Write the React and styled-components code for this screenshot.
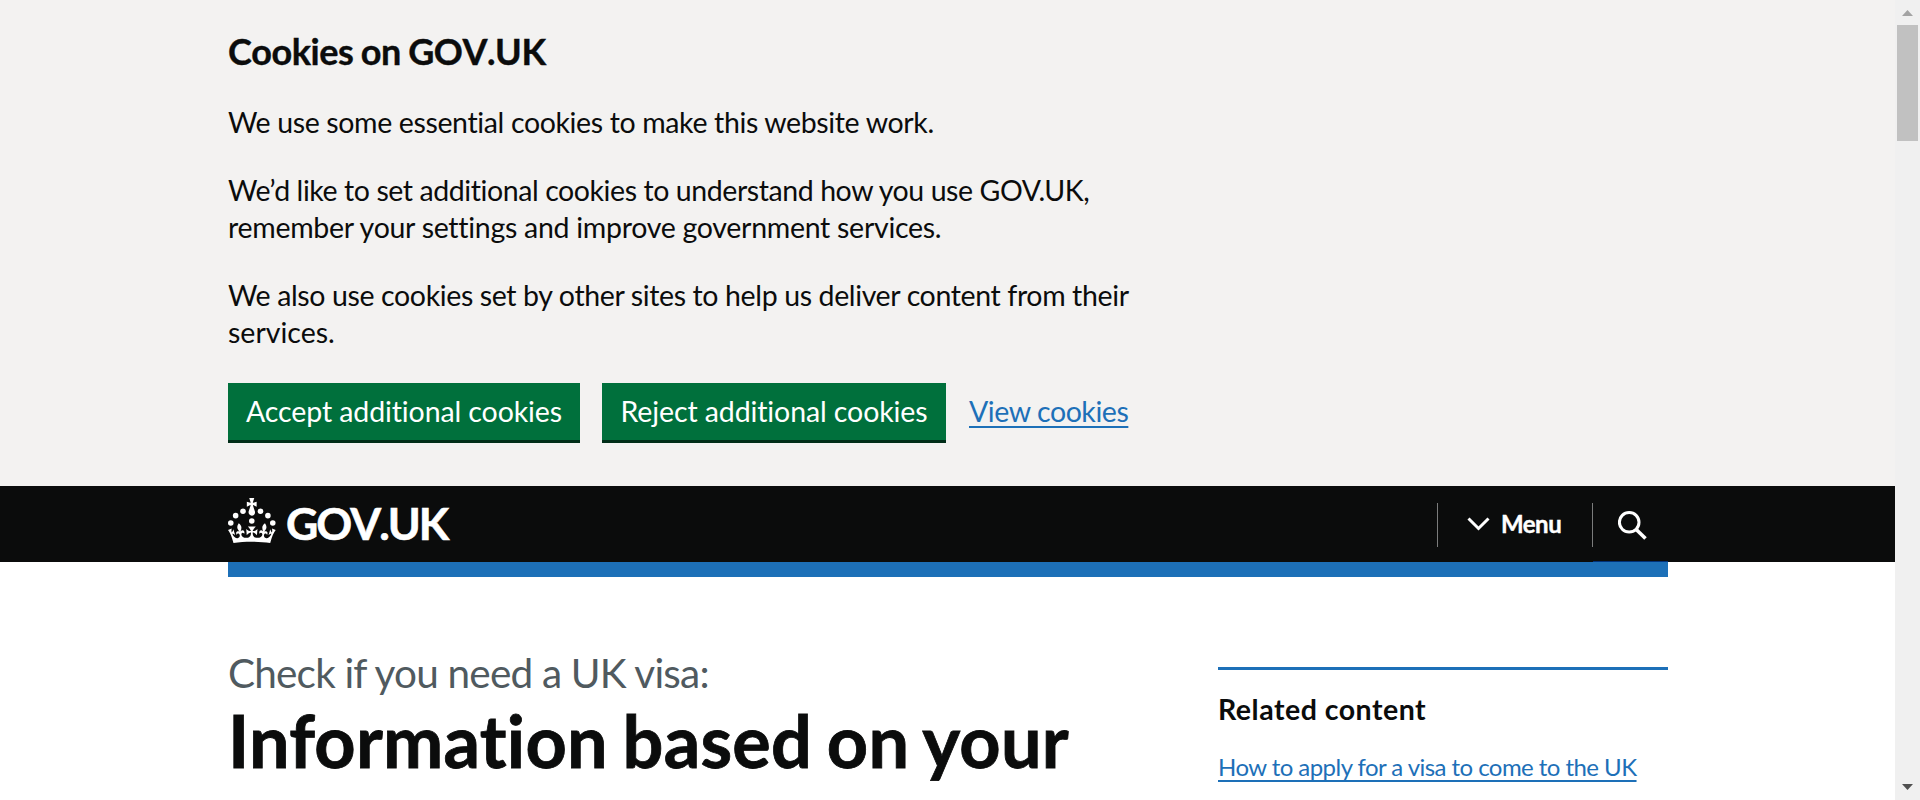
import React from "react";
import styled, { createGlobalStyle } from "styled-components";

const GlobalStyle = createGlobalStyle`
  html, body { margin: 0; padding: 0; overflow: hidden; }
  *, *::before, *::after { box-sizing: border-box; }
  body { font-family: Lato, "Open Sans", sans-serif; color: #0b0c0c; background: #fff; font-variant-ligatures: none; }
`;

const Viewport = styled.div`
  display: flex;
  height: 800px;
  overflow: hidden;
`;

const Page = styled.div`
  flex: 1;
  min-width: 0;
  overflow: hidden;
`;

const Container = styled.div`
  width: 1440px;
  margin-left: 228px;
`;

const CookieBanner = styled.section`
  height: 486px;
  padding-top: 29px;
  background: #f3f2f1;
`;

const BannerTitle = styled.h2`
  margin: 0 0 30px;
  font-size: 36px;
  line-height: 45px;
  font-weight: 700;
  font-kerning: none;
  letter-spacing: -0.45px;
  word-spacing: -1px;
  -webkit-text-stroke: 0.4px #0b0c0c;
`;

const Paragraph = styled.p`
  margin: 0 0 30px;
  font-size: 28.5px;
  line-height: 37.5px;
`;

const Line = styled.span`
  display: block;
  white-space: nowrap;
  letter-spacing: ${(p) => p.$tracking}px;
`;

const ButtonGroup = styled.div`
  display: flex;
  align-items: flex-start;
  margin-top: 31.5px;
`;

const Button = styled.button`
  width: ${(p) => p.$width}px;
  height: 57px;
  margin: 0 22px 0 0;
  padding: 0 0 1px;
  border: 0;
  border-radius: 0;
  background: #00703c;
  box-shadow: 0 3px 0 #002d18;
  color: #fff;
  font: 400 28.5px/37px Lato, sans-serif;
  letter-spacing: ${(p) => p.$tracking}px;
  white-space: nowrap;
`;

const Link = styled.a`
  color: #1d70b8;
  text-decoration: underline;
  text-decoration-thickness: 2px;
  text-underline-offset: 4px;
  text-decoration-skip-ink: none;
  font-size: ${(p) => p.$size}px;
  letter-spacing: ${(p) => p.$tracking}px;
  white-space: nowrap;
`;

const BannerLink = styled(Link)`
  margin: 9.5px 0 0 1px;
  line-height: 37.5px;
`;

const Header = styled.header`
  height: 76px;
  background: #0b0c0c;
`;

const HeaderRow = styled(Container)`
  display: flex;
  justify-content: space-between;
  height: 76px;
`;

const Logo = styled.div`
  display: flex;
  align-items: flex-start;
  padding-top: 12px;
  color: #fff;
  svg { display: block; fill: currentColor; }
`;

const Wordmark = styled.span`
  margin: -1px 0 0 10px;
  font-size: 44.5px;
  line-height: 52px;
  font-weight: 700;
  font-kerning: none;
  letter-spacing: -2px;
  -webkit-text-stroke: 0.6px #fff;
`;

const HeaderNav = styled.nav`
  display: flex;
  align-items: flex-start;
  height: 76px;
`;

const NavDivider = styled.span`
  width: 1px;
  height: 44px;
  margin-top: 17px;
  background: #7b7c7c;
`;

const MenuToggle = styled.div`
  display: flex;
  align-items: center;
  width: 154px;
  height: 76px;
  padding-left: 29px;
  color: #fff;
  font-size: 24px;
  line-height: 30px;
  font-weight: 700;
  letter-spacing: -0.5px;
  -webkit-text-stroke: 0.4px #fff;
  svg { margin-right: 11px; }
`;

const SearchToggle = styled.div`
  width: 75px;
  height: 76px;
  padding: 24px 0 0 25px;
  border-bottom: 1px solid #003078;
  svg { display: block; }
`;

const BlueBar = styled(Container)`
  height: 15px;
  background: #1d70b8;
`;

const Columns = styled(Container)`
  display: flex;
  justify-content: space-between;
  align-items: flex-start;
`;

const TitleBlock = styled.div`
  padding-top: 72.5px;
`;

const Caption = styled.div`
  margin-bottom: 8px;
  color: #505a5f;
  font-size: 40.5px;
  line-height: 45px;
  letter-spacing: -0.81px;
`;

const Title = styled.h1`
  margin: 0;
  font-size: 72px;
  line-height: 75px;
  font-weight: 700;
  letter-spacing: 0.24px;
  word-spacing: -3px;
  -webkit-text-stroke: 0.8px #0b0c0c;
  white-space: nowrap;
`;

const Related = styled.aside`
  width: 450px;
  margin-top: 90px;
  padding-top: 21px;
  border-top: 3px solid #1d70b8;
`;

const RelatedTitle = styled.h2`
  margin: 0 0 23px;
  font-size: 28.5px;
  line-height: 37.5px;
  font-weight: 700;
  letter-spacing: 0.5px;
`;

const RelatedItem = styled.div`
  line-height: 30px;
`;

const Scrollbar = styled.div`
  display: flex;
  flex-direction: column;
  align-items: center;
  width: 25px;
  height: 800px;
  padding: 10px 0;
  background: #f0f0f0;
  svg { display: block; }
`;

const Thumb = styled.div`
  width: 21px;
  height: 116px;
  margin: 9px 0 auto;
  background: #c1c1c1;
`;

function Crown() {
  return (
    <svg width="48" height="45" viewBox="0 0 64 60" aria-hidden="true">
      <circle cx="20" cy="17.6" r="3.7" />
      <circle cx="10.2" cy="23.5" r="3.7" />
      <circle cx="3.7" cy="33.2" r="3.7" />
      <circle cx="31.7" cy="30.6" r="3.7" />
      <circle cx="43.3" cy="17.6" r="3.7" />
      <circle cx="53.2" cy="23.5" r="3.7" />
      <circle cx="59.7" cy="33.2" r="3.7" />
      <path d="M33.1,9.8c.2-.1.3-.3.5-.5l4.6,2.4v-6.8l-4.6,1.5c-.1-.2-.3-.3-.5-.5l1.9-5.9h-6.7l1.9,5.9c-.2.1-.3.3-.5.5l-4.6-1.5v6.8l4.6-2.4c.1.2.3.3.5.5l-2.6,8c-.9,2.8,1.2,5.7,4.1,5.7h0c3,0,5.1-2.9,4.1-5.7l-2.6-8ZM37,37.9s-3.4,3.8-4.1,6.1c2.2,0,4.2-.5,6.4-2.8l-.7,8.5c-2-2.8-4.4-4.1-5.7-3.8.1,3.1.5,6.7,5.8,7.2,3.7.3,6.7-1.5,7-3.8.4-2.6-2-4.3-3.7-1.6-1.4-4.5,2.4-6.1,4.9-3.2-1.9-4.5-1.8-7.7,2.4-10.9,3,4,2.6,7.3-1.2,11.1,2.4-1.3,6.2,0,4,4.6-1.2-2.8-3.7-2.2-4.2.2-.3,1.7.7,3.7,3,4.2,1.9.3,4.7-.9,7-5.9-1.3,0-2.4.7-3.9,1.7l2.4-8c.6,2.3,1.4,3.7,2.2,4.5.6-1.6.5-2.8,0-5.3l5,1.8c-2.6,3.6-5.2,8.7-7.3,17.5-7.4-1.1-15.7-1.7-24.5-1.7h0c-8.8,0-17.1.6-24.5,1.7-2.1-8.9-4.7-13.9-7.3-17.5l5-1.8c-.5,2.5-.6,3.7,0,5.3.8-.8,1.6-2.3,2.2-4.5l2.4,8c-1.5-1-2.6-1.7-3.9-1.7,2.3,5,5.2,6.2,7,5.9,2.3-.4,3.3-2.4,3-4.2-.5-2.4-3-3.1-4.2-.2-2.2-4.6,1.6-6,4-4.6-3.7-3.7-4.2-7.1-1.2-11.1,4.2,3.2,4.3,6.4,2.4,10.9,2.5-2.8,6.3-1.3,4.9,3.2-1.8-2.7-4.1-1-3.7,1.6.3,2.3,3.3,4.1,7,3.8,5.4-.5,5.7-4.2,5.8-7.2-1.3-.2-3.7,1-5.7,3.8l-.7-8.5c2.2,2.3,4.2,2.7,6.4,2.8-.7-2.3-4.1-6.1-4.1-6.1h10.6Z" />
    </svg>
  );
}

export default function App() {
  return (
    <Viewport>
      <GlobalStyle />
      <Page>
        <CookieBanner>
          <Container>
            <BannerTitle>Cookies on GOV.UK</BannerTitle>
            <Paragraph>
              <Line $tracking={-0.36}>We use some essential cookies to make this website work.</Line>
            </Paragraph>
            <Paragraph>
              <Line $tracking={-0.42}>We’d like to set additional cookies to understand how you use GOV.UK,</Line>
              <Line $tracking={-0.28}>remember your settings and improve government services.</Line>
            </Paragraph>
            <Paragraph>
              <Line $tracking={-0.37}>We also use cookies set by other sites to help us deliver content from their</Line>
              <Line $tracking={0}>services.</Line>
            </Paragraph>
            <ButtonGroup>
              <Button $width={352} $tracking={-0.1}>Accept additional cookies</Button>
              <Button $width={344} $tracking={-0.1}>Reject additional cookies</Button>
              <BannerLink $size={28.5} $tracking={-0.43}>View cookies</BannerLink>
            </ButtonGroup>
          </Container>
        </CookieBanner>
        <Header>
          <HeaderRow>
            <Logo>
              <Crown />
              <Wordmark>GOV.UK</Wordmark>
            </Logo>
            <HeaderNav>
              <NavDivider />
              <MenuToggle>
                <svg width="23" height="15" viewBox="0 0 23 15" fill="none" stroke="#fff" strokeWidth="3">
                  <path d="M1.5 1.5 11.5 11.5 21.5 1.5" />
                </svg>
                Menu
              </MenuToggle>
              <NavDivider />
              <SearchToggle>
                <svg width="30" height="31" viewBox="0 0 30 31" fill="none" stroke="#fff" strokeWidth="3">
                  <circle cx="11.2" cy="12.3" r="9.8" />
                  <path d="M18 19.2 27.5 28.5" strokeWidth="3.6" />
                </svg>
              </SearchToggle>
            </HeaderNav>
          </HeaderRow>
        </Header>
        <BlueBar />
        <Columns>
          <TitleBlock>
            <Caption>Check if you need a UK visa:</Caption>
            <Title>Information based on your</Title>
          </TitleBlock>
          <Related>
            <RelatedTitle>Related content</RelatedTitle>
            <RelatedItem>
              <Link $size={24} $tracking={-0.55}>How to apply for a visa to come to the UK</Link>
            </RelatedItem>
          </Related>
        </Columns>
      </Page>
      <Scrollbar>
        <svg width="11" height="6" viewBox="0 0 11 6" fill="#a3a3a3"><path d="M5.5 0 11 6H0Z" /></svg>
        <Thumb />
        <svg width="11" height="6" viewBox="0 0 11 6" fill="#505050"><path d="M0 0H11L5.5 6Z" /></svg>
      </Scrollbar>
    </Viewport>
  );
}
